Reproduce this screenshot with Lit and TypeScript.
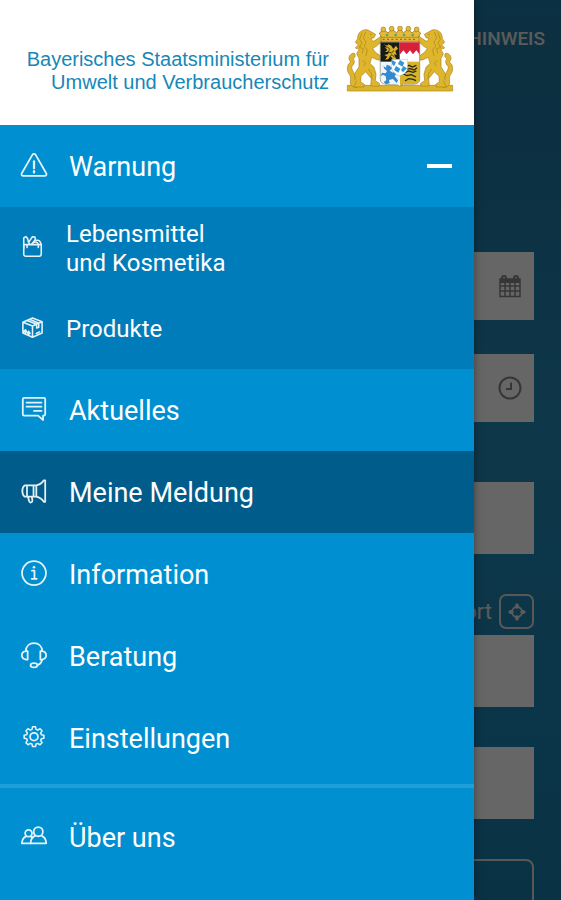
import { LitElement, html, svg, css, nothing } from "lit";
import type { TemplateResult } from "lit";
import { customElement, property, state } from "lit/decorators.js";
import { classMap } from "lit/directives/class-map.js";

const icons: Record<string, TemplateResult> = {
  warning: svg`<path d="M12.400 2.800a1.900 1.900 0 0 1 3.200 0l11.500 20a1.900 1.900 0 0 1-1.600 2.900H2.500a1.900 1.900 0 0 1-1.600-2.900z"/><path d="M14 10v7.500" stroke-width="2.400"/><path d="M14 20.500v1.500" stroke-width="2.400"/>`,
  groceries: svg`<path d="M3.500 11.500h21v11.600a2.400 2.400 0 0 1-2.400 2.400H5.900a2.400 2.400 0 0 1-2.400-2.400z"/><path d="M3.500 16V3.500l2.500-1.500 2 2 1 4 1.500 3M9.500 8.500l4.500-6.500 3 .5.500 3-4.500 5.500M13.500 11a4 4 0 0 1 7.500 0M18.500 6.500c3-1 5 1 6 5M7.500 11.500v3.500M21 11.500v3.500"/>`,
  box: svg`<path d="M2.500 7.500 14 2.500l11.500 4.500v13.500L14 25.500l-11.500-5zM2.500 7.500 14 12l11.500-5M14 12v13.500M7.500 5.300 19 9.800v4.700l2.500-1V8.600L10.500 4M5.500 21.500v-4.500M4 18.500l1.500-2 1.500 2.500M9.500 23v-4.500M8 20.500l1.500-2 1.500 2.500M18.500 21l4-2"/>`,
  news: svg`<path d="M3.500 2h21a1.500 1.500 0 0 1 1.500 1.500v16a1.500 1.500 0 0 1-1.500 1.500h-.8v4.800L18.500 21h-15A1.500 1.500 0 0 1 2 19.500v-16A1.500 1.500 0 0 1 3.500 2z"/><path d="M6 7h16M6 11.500h16M14 16h8"/>`,
  megaphone: svg`<path d="M4 8h12.500v12H4C2.300 19 1.500 17 1.500 14S2.300 9 4 8zM16.500 8c3.500-.7 6-2.300 8-5.500h1.500v23h-1.500c-2-3.200-4.500-4.800-8-5.500M6.500 8v12M13.500 8v12M7.500 20l1.300 5a1.800 1.800 0 0 0 3.500-.7L11.700 20"/>`,
  info: svg`<circle cx="14" cy="14" r="12.800"/><path d="M11.800 11.500H14.500V20M11.500 20.200h5.500"/><circle cx="14" cy="7.800" r="1.400" fill="currentColor" stroke="none"/>`,
  headset: svg`<path d="M5 10C5.500 4.700 9 1.300 14 1.300S22.500 4.700 23 10M5.500 9.800h1.700v9H5.500C3 18.500 1 17 1 14.300s2-4.200 4.500-4.500zM22.500 9.800h-1.700v9h1.700c2.500-.3 4.500-1.800 4.500-4.500s-2-4.200-4.500-4.500zM22.800 19c-.8 3-2.600 5-5.300 5.700"/><ellipse cx="14" cy="25" rx="3.700" ry="2.300"/>`,
  gear: svg`<path transform="translate(1.700 .4) scale(.88)" d="M12.200 3h3.600l.7 3.100 2 .9 2.800-1.700 2.500 2.500-1.700 2.800.9 2 3 .7v3.500l-3 .7-.9 2 1.700 2.800-2.500 2.500-2.800-1.700-2 .9-.7 3h-3.600l-.7-3-2-.9-2.800 1.700-2.500-2.500 1.700-2.800-.9-2-3-.7v-3.500l3-.7.9-2-1.700-2.800 2.500-2.500 2.800 1.700 2-.9z"/><circle cx="14" cy="13.600" r="4.200"/>`,
  people: svg`<circle cx="18.600" cy="9.300" r="4.900"/><path d="M15.500 13.500c-3.500 1.200-5 4-5.200 8.300h16.800c-.2-4.300-1.800-7.100-5.300-8.300"/><circle cx="8.200" cy="11" r="3.700"/><path d="M5.800 14.300C2.800 15.300 1.200 17.500 1 21.800h9.300M10.400 14.300l2.200 1.200"/>`,
};

@customElement("nav-icon")
class NavIcon extends LitElement {
  @property() name = "";
  static styles = css`
    :host { display: block; flex: none; width: 28px; height: 28px; }
    svg { display: block; width: 100%; height: 100%; fill: none; stroke: currentColor; stroke-width: 1.9; stroke-linejoin: round; stroke-linecap: round; opacity: 0.9; }
  `;
  render() {
    return html`<svg viewBox="-1 0 30 30" aria-hidden="true">${icons[this.name]}</svg>`;
  }
}

@customElement("state-arms")
class StateArms extends LitElement {
  static styles = css`
    :host { display: block; flex: none; width: 108px; height: 66px; }
    svg { display: block; width: 100%; height: 100%; }
  `;
  private lion() {
    return svg`
      <g fill="#dfb62b" stroke="#a9831f" stroke-width="2" stroke-linejoin="round">
        <path d="M21 182C6 174 18 160 12 148C2 136 0 118 14 108C5 99 8 84 24 81C31 86 27 96 21 98C29 106 23 116 17 122C17 137 30 141 27 158C25 168 29 170 37 166L32 185z"/>
        <path d="M35 38C34 20 49 8 66 12L78 19L89 25L84 35L74 38L83 46L101 34L111 24L118 31L110 43L91 61L80 67L87 78L101 88L114 91L111 101L95 102L77 94L72 112L84 124L90 144L88 164L101 173L98 181L74 180L76 158L59 137L45 151L44 168L55 175L54 183L22 183L31 169L25 145L39 122L39 97L32 83L40 70L28 66L37 57L28 49z"/>
        <path d="M48 20l-7 20 7 11-8 13 12 4-3 14M59 18l-7 17 8 13-5 13 9 11-4 18M50 104l9 7-6 9M67 129l9 14 2 18M72 24l6 2" fill="none"/>
      </g>`;
  }
  render() {
    return html`<svg viewBox="0 0 324 198" role="img" aria-label="Bayerisches Staatswappen">
      <path d="M4 178H320V195H4z" fill="#dbb42c" stroke="#ac851e" stroke-width="2"/>
      ${this.lion()}
      <g transform="translate(324 0) scale(-1 1)">${this.lion()}</g>
      <path d="M103 48h118v110q0 15-16 16h-33l-10 7-10-7h-33q-16-1-16-16z" fill="#fff" stroke="#5b5131" stroke-width="2"/>
      <path d="M104 49h57v58h-57z" fill="#171b16"/>
      <path d="M114 55l9 4 4-4 9 4 6 10 8-10 6 9-8 7 4 12-8-2 8 17-12-3-6-8-8 9-9 1 7-9-9-5 11-3 3-7-12 1 7-7-8-7 9 1z" fill="#d7ae29"/>
      <path d="M124 63l8 7-6 7 10 4 8-7M130 93l8-7 8 8" stroke="#453817" stroke-width="3" fill="none"/>
      <path d="M162 49h58v58h-58z" fill="#d9203b"/>
      <path d="M162 85l10-12 10 12 10-12 9 12 10-12 9 12v22h-58z" fill="#fff"/>
      <path d="M104 108h57v72l-10-6h-31q-15-1-16-15z" fill="#eef5fa"/>
      <path d="M112 120l8 5 2-9 9 3 8 7-8 8 10 6 10-9 4 6-9 14 10 12-4 8-11-12-12 3 2 10-11 3-7-7 8-5-2-12-7-5-8 4 4-10 11 2 4-7-8-7z" fill="#3389cb"/>
      <path d="M162 108h58v50q0 15-15 16h-33l-10 6z" fill="#d7b329"/>
      <g fill="none" stroke="#282817" stroke-width="4">
        <path d="M171 118l9 5 9-5 10 5 12-5M170 121l8 9 14-2 13 4 8-7M177 140l11-5 14 4 9-4M172 144l11 5 13-3 14 7M177 165l11-7 14 2 8 4"/>
      </g>
      <path d="M137 100h48v23q0 19-24 27q-24-8-24-27z" fill="#fff" stroke="#7395aa" stroke-width="1"/>
      <path d="M138 102l12 7-6 12-6-7zm24 0l13 8-6 12-13-8zm-12 18l13 8-6 12-13-8zm22 0l11 7-12 12-6-7z" fill="#3695d3"/>
      <path d="M109 39L100 21l13-11 13 11 12-13 14 13 10-16 10 16 14-13 12 13 13-11 13 11-10 18z" fill="#e4bb38" stroke="#9f7820" stroke-width="2.500"/>
      <g fill="#e4bb38" stroke="#a37a1b" stroke-width="2"><circle cx="112" cy="10" r="7"/><circle cx="137" cy="8" r="7"/><circle cx="162" cy="7" r="7"/><circle cx="187" cy="8" r="7"/><circle cx="212" cy="10" r="7"/><path d="M105 34h114v12H105z"/></g>
      <g fill="#52a477"><circle cx="123" cy="27" r="4"/><circle cx="149" cy="27" r="4"/><circle cx="174" cy="27" r="4"/><circle cx="200" cy="27" r="4"/></g>
      <path d="M110 40h104" stroke="#b45a35" stroke-width="4" stroke-dasharray="6 7"/>
    </svg>`;
  }
}

@customElement("report-page")
class ReportPage extends LitElement {
  static styles = css`
    :host { display: block; min-height: 100%; color: #e4e4e4; background: linear-gradient(180deg, #1a7aa8 0%, #20789f 4%, #1e78a4 14%, #248ab8 45%, #1c85b4 75%, #187baa 100%); font-family: Roboto, "Liberation Sans", sans-serif; }
    .bar { display: flex; justify-content: flex-end; align-items: center; height: 78px; padding: 0 16px; }
    .hint { color: inherit; font-size: 19px; line-height: 24px; font-weight: 500; text-decoration: none; }
    form { display: flex; flex-direction: column; gap: 40px; padding: 174px 27px 24px; }
    .times { display: flex; flex-direction: column; gap: 34px; margin-bottom: 20px; }
    .field { display: flex; align-items: center; background: #fff; height: 68px; padding-right: 12px; color: #888; }
    .field input { flex: 1; min-width: 0; align-self: stretch; }
    .field svg { width: 24px; height: 24px; flex: none; }
    input { border: 0; border-radius: 0; background: #fff; padding: 0 16px; font: 24px/28px Roboto, sans-serif; }
    .plain { height: 72px; width: 100%; box-sizing: border-box; display: block; }
    .place { display: flex; flex-direction: column; gap: 6px; }
    .locate { display: flex; align-items: center; justify-content: flex-end; gap: 7px; font-size: 22px; line-height: 28px; }
    button { font: inherit; color: inherit; background: none; border: 2px solid #ddd; border-radius: 8px; padding: 0; }
    .target { width: 35px; height: 35px; display: grid; place-items: center; border-radius: 7px; }
    .target svg { width: 18px; height: 18px; }
    .send { height: 68px; }
    svg { display: block; fill: none; stroke: currentColor; stroke-width: 2; }
  `;
  render() {
    return html`
      <header class="bar"><a class="hint" href="#hinweis">HINWEIS</a></header>
      <form>
        <div class="times">
          <div class="field"><input type="text" aria-label="Datum">
            <svg viewBox="0 0 24 24" aria-hidden="true"><path d="M2 5h20v17.500H2zM2 12h20M2 17h20M7 9v13M12 9v13M17 9v13" stroke-width="1.500"/><path d="M2 5h20v4H2z" fill="currentColor" stroke="none"/><path d="M4 7V4a2 2 0 0 1 4 0v3M16 7V4a2 2 0 0 1 4 0v3"/></svg>
          </div>
          <div class="field"><input type="text" aria-label="Uhrzeit">
            <svg viewBox="0 0 24 24" aria-hidden="true"><circle cx="12" cy="12" r="10.500"/><path d="M13 6.500v6.500H8"/></svg>
          </div>
        </div>
        <input class="plain" type="text" aria-label="Betreff">
        <div class="place">
          <div class="locate"><label for="place">Standort</label>
            <button class="target" type="button" aria-label="Standort ermitteln"><svg viewBox="0 0 18 18" aria-hidden="true"><circle cx="9" cy="9" r="5" stroke-width="1.800"/><path d="M9 0l2 2v2.500L9 6 7 4.500V2zM9 18l-2-2v-2.500L9 12l2 1.500V16zM0 9l2-2h2.500L6 9l-1.500 2H2zM18 9l-2 2h-2.500L12 9l1.500-2H16z" fill="currentColor" stroke="none"/></svg></button>
          </div>
          <input class="plain" id="place" type="text">
        </div>
        <input class="plain" type="text" aria-label="Adresse">
        <button class="send" type="button" aria-label="Weiter"></button>
      </form>`;
  }
}

interface Entry { icon: string; label: string; active?: boolean; }

@customElement("side-menu")
class SideMenu extends LitElement {
  @state() private open = true;
  static styles = css`
    :host { display: block; background: #0090d1; color: #fff; font: 27px/32px Roboto, "Liberation Sans", sans-serif; }
    .brand { display: flex; align-items: center; justify-content: flex-end; gap: 17px; height: 125px; box-sizing: border-box; padding: 0 20px 8px 0; background: #fff; color: #1687b8; }
    .ministry { margin: 0; padding-top: 24px; text-align: right; font: 20px/23px "Liberation Sans", Arial, sans-serif; white-space: nowrap; }
    ul { list-style: none; margin: 0; padding: 0; }
    .row { display: flex; align-items: center; gap: 21px; box-sizing: border-box; width: 100%; height: 82px; padding: 0 22px 0 20px; border: 0; background: none; color: inherit; font: inherit; text-align: left; text-decoration: none; }
    .row span { flex: 1; padding-top: 2px; }
    .active { background: #005d8b; }
    .sub { background: #007cba; font-size: 24px; line-height: 29px; }
    .sub .row { height: 81px; }
    .sub nav-icon { width: 25px; height: 25px; }
    .sign { width: 25px; height: 4px; background: #fff; }
    hr { margin: 5px 0 8px; border: 0; height: 4px; background: #1f9fd8; }
  `;
  private link(e: Entry) {
    return html`<li><a class=${classMap({ row: true, active: !!e.active })} href="#${e.icon}" aria-current=${e.active ? "page" : nothing}>
      <nav-icon name=${e.icon}></nav-icon><span>${e.label}</span></a></li>`;
  }
  render() {
    const main: Entry[] = [
      { icon: "news", label: "Aktuelles" },
      { icon: "megaphone", label: "Meine Meldung", active: true },
      { icon: "info", label: "Information" },
      { icon: "headset", label: "Beratung" },
      { icon: "gear", label: "Einstellungen" },
    ];
    return html`
      <header class="brand">
        <p class="ministry">Bayerisches Staatsministerium für<br>Umwelt und Verbraucherschutz</p>
        <state-arms></state-arms>
      </header>
      <nav>
        <ul>
          <li>
            <button class="row" type="button" aria-expanded=${this.open ? "true" : "false"} @click=${() => (this.open = !this.open)}>
              <nav-icon name="warning"></nav-icon><span>Warnung</span><i class="sign"></i>
            </button>
            ${this.open ? html`<ul class="sub">
              <li><a class="row" href="#groceries"><nav-icon name="groceries"></nav-icon><span>Lebensmittel<br>und Kosmetika</span></a></li>
              <li><a class="row" href="#box"><nav-icon name="box"></nav-icon><span>Produkte</span></a></li>
            </ul>` : nothing}
          </li>
          ${main.map((e) => this.link(e))}
        </ul>
        <hr>
        <ul>${this.link({ icon: "people", label: "Über uns" })}</ul>
      </nav>`;
  }
}

@customElement("app-root")
class AppRoot extends LitElement {
  static styles = css`
    :host { display: block; position: relative; height: 100vh; overflow: hidden; }
    .scrim { position: absolute; inset: 0; background: rgba(0, 0, 0, 0.6); }
    side-menu { position: absolute; inset: 0 87px 0 0; box-shadow: 0 0 8px rgba(0, 0, 0, 0.4); }
  `;
  render() {
    return html`<report-page></report-page><div class="scrim"></div><side-menu></side-menu>`;
  }
}
